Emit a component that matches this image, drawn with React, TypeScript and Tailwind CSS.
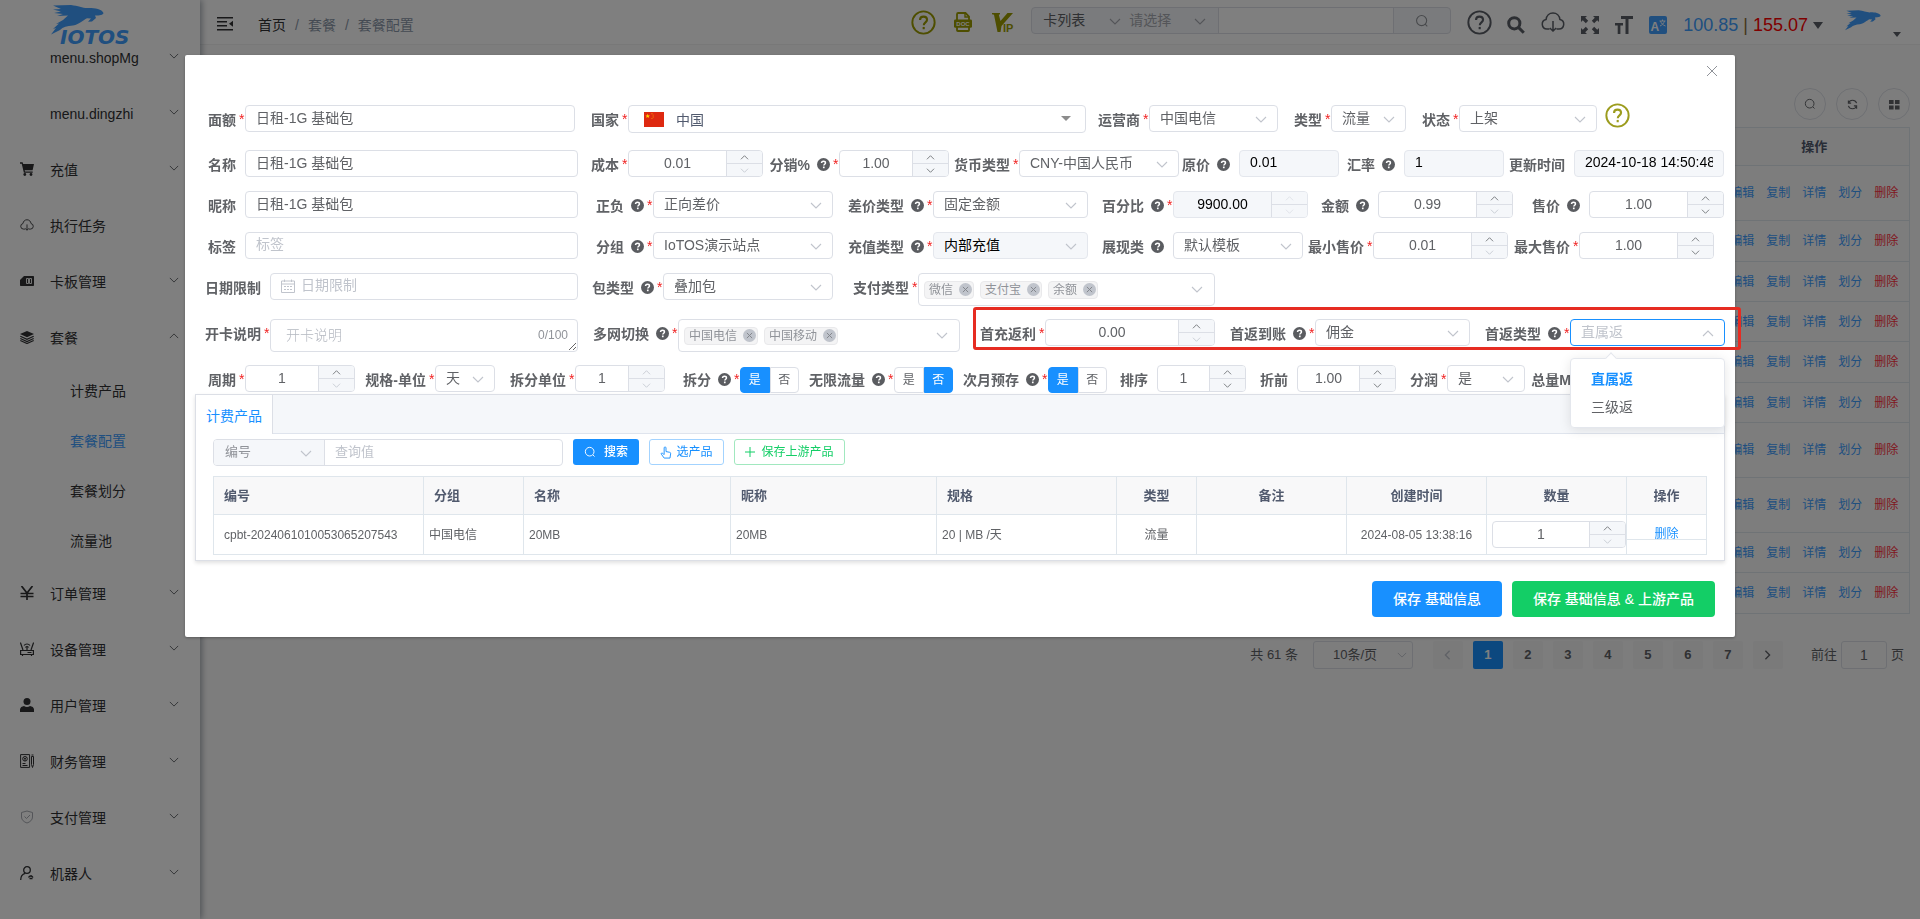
import React, { useState } from "react";
import { clsx } from "clsx";

type IconProps = { className?: string };

interface FieldProps {
    id: string;
    label: string;
    labelWidth: string;
    width: string;
    required?: boolean;
    help?: boolean;
}

/* ---------- Icons ---------- */

function Chevron({ className, up }: IconProps & { up?: boolean }) {
    return (
        <svg viewBox="0 0 12 7" fill="none" stroke="currentColor" strokeWidth="1.1" className={clsx("pointer-events-none h-[7px] w-3", className)}>
            <path d={up ? "M1 6 6 1l5 5" : "m1 1 5 5 5-5"} />
        </svg>
    );
}

function HelpDot() {
    return (
        <svg viewBox="0 0 14 14" className="size-[13px] shrink-0 text-[#5a5c60]">
            <circle cx="7" cy="7" r="7" fill="currentColor" />
            <path d="M4.9 5.5c0-1.3.9-2 2.1-2s2.1.7 2.1 1.8c0 1.4-1.8 1.4-1.8 2.8" fill="none" stroke="#fff" strokeWidth="1.6" />
            <rect x="6.4" y="9.2" width="1.8" height="1.8" fill="#fff" />
        </svg>
    );
}

function HelpRing({ className }: IconProps) {
    return (
        <svg viewBox="0 0 26 26" fill="none" stroke="currentColor" strokeWidth="2" className={clsx("size-[25px] shrink-0", className)}>
            <circle cx="13" cy="13" r="11.6" />
            <path d="M9.4 10.4c0-2.3 1.6-3.5 3.6-3.5s3.7 1.3 3.7 3.3c0 2.6-3.4 2.7-3.4 5.6" strokeWidth="2.2" />
            <path d="M13.2 17.6v2.4" strokeWidth="2.2" />
        </svg>
    );
}

function Lens({ className, bold }: IconProps & { bold?: boolean }) {
    return (
        <svg viewBox="0 0 18 18" fill="none" stroke="currentColor" strokeWidth={bold ? 3 : 1.4} className={className}>
            {bold ? <path d="M7.3 1.7a5.6 5.6 0 1 0 0 11.2 5.6 5.6 0 0 0 0-11.2ZM11.4 11.4l5.4 5.4" /> : <path d="M8.5 2a6.5 6.5 0 1 0 0 13 6.5 6.5 0 0 0 0-13ZM13.4 13.4l2.4 2.4" />}
        </svg>
    );
}

function DocIcon() {
    return (
        <svg viewBox="0 0 18 20" className="h-5 w-[18px] text-[#9c9c00]">
            <path d="M3 8V2.2C3 1.5 3.5 1 4.2 1h7.3L15 4.6V8" fill="none" stroke="currentColor" strokeWidth="1.8" />
            <path d="M11 1v4h4" fill="none" stroke="currentColor" strokeWidth="1.4" />
            <rect x="0" y="7.4" width="18" height="8.4" rx="1.4" fill="currentColor" />
            <path d="M3 15v3.2c0 .5.4.8.9.8h10.2c.5 0 .9-.3.9-.8V15" fill="none" stroke="currentColor" strokeWidth="1.8" />
            <text x="9" y="13.7" textAnchor="middle" fontSize="6" fontWeight="700" fill="#fff" fontFamily="Liberation Sans, sans-serif">DOC</text>
        </svg>
    );
}

function VipIcon() {
    return (
        <svg viewBox="0 0 22 20" className="h-5 w-[22px] text-[#9c9c00]">
            <path d="M0 0h8v1.2l-1.2.6L8.500 8 15.500 0H21L9.500 13l-1 6h-3L2 1.800 0 1.200Z" fill="currentColor" />
            <text x="11" y="19" fontSize="11" fontWeight="700" fill="currentColor" fontFamily="Liberation Sans, sans-serif">IP</text>
        </svg>
    );
}

function CloudDown({ className }: IconProps) {
    return (
        <svg viewBox="0 0 24 20" fill="none" stroke="currentColor" strokeWidth="1.5" className={className}>
            <path d="M8.5 17H6a4.8 4.8 0 0 1-.9-9.5C5.500 3.800 8.300 1 12 1s6.500 2.800 6.900 6.500A4.800 4.800 0 0 1 18 17h-2.500" />
            <path d="M12 9v9.500M8.800 16l3.200 3 3.200-3" />
        </svg>
    );
}

function ExpandIcon() {
    return (
        <svg viewBox="0 0 18 18" fill="currentColor" className="size-[18px]">
            <path d="M0 0h6L4.200 1.800l3 3-2.400 2.400-3-3L0 6ZM18 0v6l-1.800-1.800-3 3-2.400-2.400 3-3L12 0ZM0 18v-6l1.800 1.800 3-3 2.400 2.400-3 3L6 18ZM18 18h-6l1.800-1.800-3-3 2.400-2.400 3 3L18 12Z" />
        </svg>
    );
}

function FontSizeIcon() {
    return (
        <svg viewBox="0 0 18 18" fill="currentColor" className="size-[18px]">
            <path d="M6 0h12v3h-4.500v15h-3V3H6ZM0 7h8v2.600H5.400V18H2.700V9.600H0Z" />
        </svg>
    );
}

function TranslateIcon() {
    return (
        <svg viewBox="0 0 18 18" className="size-[18px]">
            <rect width="18" height="18" rx="2" fill="#409eff" />
            <text x="1.500" y="14.500" fontSize="12" fontWeight="700" fill="#fff" fontFamily="Liberation Sans, sans-serif">A</text>
            <path d="M10.500 5h6M13.500 3.500V5M15.500 5c-.8 2.600-2.300 4-4.500 5M11.500 5c.8 2.600 2.300 4 5 5" stroke="#fff" strokeWidth=".9" fill="none" />
        </svg>
    );
}

// Leaping animal of the brand mark, with speed streaks on its left side
const rabbitPath =
    "M2 .5 20 0c8 1 12 3.500 18 3 6 0 13 1 14.500 5-.5 2-3.500 2.500-8.500 2.500l1 2.500-4 3.500-4 .3 3-3.300-4-.3c-4 1.800-7 5.800-14 7.300-6 .5-10 1.500-13 4.500L0 29.500 5 23l-3 1 6-5.500-3 .5 7-4 5-4.500-11 .5 6-2-9-1 7-1.500-8-2 8-.5Z";

function Rabbit({ className }: IconProps) {
    return (
        <svg viewBox="0 0 53 30" fill="currentColor" className={className}>
            <path d={rabbitPath} />
        </svg>
    );
}

function MenuIcon({ name }: { name: string }) {
    const cls = "size-[14px]";
    switch (name) {
        case "cart":
            return (
                <svg viewBox="0 0 14 14" fill="currentColor" className={cls}>
                    <path d="M0 .3h2.600l.6 1.700H14l-1.400 6.300H4.700l.3 1.200h7.700v1.300H3.900L1.700 1.700H0Z" />
                    <circle cx="4.800" cy="12.500" r="1.400" />
                    <circle cx="11" cy="12.500" r="1.400" />
                </svg>
            );
        case "cloud":
            return <CloudDown className={cls} />;
        case "card":
            return (
                <svg viewBox="0 0 14 14" className={cls}>
                    <path d="M4 2h9c.6 0 1 .4 1 1v8c0 .6-.4 1-1 1H1c-.6 0-1-.4-1-1V6Z" fill="currentColor" />
                    <path d="M6.500 4.500h2v5h-2zM9.500 4.500h2v5h-2z" fill="none" stroke="#fff" strokeWidth=".9" />
                </svg>
            );
        case "stack":
            return (
                <svg viewBox="0 0 14 14" className={cls}>
                    <path d="m7 1 7 3-7 3.200L0 4Z" fill="currentColor" />
                    <path d="m.3 6.300 6.700 3 6.700-3M.3 8.500l6.700 3 6.700-3M.3 10.500l6.700 3 6.700-3" fill="none" stroke="currentColor" strokeWidth="1.200" />
                </svg>
            );
        case "yen":
            return (
                <svg viewBox="0 0 14 14" fill="none" stroke="currentColor" strokeWidth="1.700" className={cls}>
                    <path d="m1.500 0 5.500 7 5.500-7M7 7v7M.5 7.500h13M.5 10.500h13" />
                </svg>
            );
        case "router":
            return (
                <svg viewBox="0 0 14 14" fill="none" stroke="currentColor" strokeWidth="1.200" className={cls}>
                    <path d="M.6 8.500h12.800v4H.6zM3 8 .4.500M11 8 13.600.500M4 3.500C5.500 1.500 8.500 1.500 10 3.500M5.500 5.500c1-1 2-1 3 0M7 6v2M2.500 12.500V14M11.500 12.500V14M7.500 10.500h4" />
                </svg>
            );
        case "user":
            return (
                <svg viewBox="0 0 14 14" fill="currentColor" className={cls}>
                    <circle cx="7" cy="3.500" r="3.500" />
                    <path d="M0 14v-2.500C0 9.500 2 8.300 4 8c1.800 1.200 4.200 1.200 6 0 2 .3 4 1.500 4 3.500V14Z" />
                </svg>
            );
        case "bill":
            return (
                <svg viewBox="0 0 14 14" fill="none" stroke="currentColor" strokeWidth="1" className={cls}>
                    <path d="M.6.6h9v12.800h-9zM11.500 2.500h2v8l-1 3-1-3zM11.500 1h2" />
                    <circle cx="5" cy="4.800" r="2.300" />
                    <path d="M3.700 3.500 5 5l1.300-1.500M5 5v2M2.500 9.500h3M2.500 11.500h5" />
                </svg>
            );
        case "shield":
            return (
                <svg viewBox="0 0 14 14" fill="none" stroke="#a8abb2" strokeWidth="1" className={cls}>
                    <path d="m7 1 5.500 1.500V7c0 3-2.500 5-5.500 6C4 12 1.500 10 1.500 7V2.500ZM4.500 6.500 6.500 8.500 10 5" />
                </svg>
            );
        case "robot":
            return (
                <svg viewBox="0 0 14 14" fill="none" stroke="currentColor" strokeWidth="1.300" className={cls}>
                    <circle cx="7" cy="4" r="3.300" />
                    <path d="M.7 14c0-3.500 2-6 4.500-6.700M8.500 11.500c1-2 3.500-2 4.500 0M9.500 12.500h3M10 10h2" />
                </svg>
            );
        default:
            return null;
    }
}

/* ---------- Form controls ---------- */

const inputBase = "h-[27px] w-full rounded-[4px] border border-[#dcdfe6] bg-white px-2.5 text-sm text-[#606266] outline-none placeholder:text-[#c0c4cc] disabled:bg-[#f5f7fa] disabled:text-black disabled:border-[#e4e7ed]";

function FieldLabel({ id, label, labelWidth, required, help }: Omit<FieldProps, "width">) {
    return (
        <label htmlFor={id} className={clsx("flex h-[27px] shrink-0 items-center justify-end pt-0.5 text-sm font-bold whitespace-nowrap text-[#606266]", labelWidth)}>
            {label}
            {help && <span className="ml-[7px]"><HelpDot /></span>}
            <span className="w-[9px] pb-0.5 pl-[3px] text-sm font-normal text-[#f02020]">{required ? "*" : ""}</span>
        </label>
    );
}

function TextField({ value, placeholder, disabled, ...field }: FieldProps & { value?: string; placeholder?: string; disabled?: boolean }) {
    return (
        <>
            <FieldLabel {...field} />
            <div className={clsx("shrink-0", field.width)}>
                <input id={field.id} type="text" defaultValue={value} placeholder={placeholder} disabled={disabled} className={clsx(inputBase, "pb-[3px]")} />
            </div>
        </>
    );
}

function SelectField({ value, disabled, open, ...field }: FieldProps & { value: string; disabled?: boolean; open?: boolean }) {
    return (
        <>
            <FieldLabel {...field} />
            <div className={clsx("relative shrink-0", field.width)}>
                <select
                    id={field.id}
                    disabled={disabled}
                    className={clsx(inputBase, "appearance-none pb-0.5 disabled:opacity-100", open && "!border-[#1890ff] !text-[#c0c4cc]")}
                >
                    <option>{value}</option>
                </select>
                <Chevron up={open} className="absolute top-[11px] right-[11px] text-[#c0c4cc]" />
            </div>
        </>
    );
}

function NumberBox({ id, value, width, disabled, upOff, downOff, label }: { id: string; value: string; width: string; disabled?: boolean; upOff?: boolean; downOff?: boolean; label?: string }) {
    return (
        <div className={clsx("flex h-[27px] shrink-0 overflow-hidden rounded-[4px] border", width, disabled ? "border-[#e4e7ed] bg-[#f5f7fa]" : "border-[#dcdfe6] bg-white")}>
            <input
                id={id}
                aria-label={label}
                type="text"
                defaultValue={value}
                disabled={disabled}
                className={clsx("min-w-0 flex-1 pb-0.5 text-center text-sm outline-none", disabled ? "text-black" : "text-[#606266]")}
            />
            <div className="flex w-9 flex-col border-l border-[#dcdfe6] bg-[#f5f7fa]">
                <button type="button" aria-label="增加" className="flex flex-1 items-center justify-center border-b border-[#dcdfe6]">
                    <Chevron up className={clsx("!h-[5px] !w-[9px]", disabled ? "text-[#dcdfe6]" : upOff ? "text-[#c0c4cc]" : "text-[#606266]")} />
                </button>
                <button type="button" aria-label="减少" className="flex flex-1 items-center justify-center">
                    <Chevron className={clsx("!h-[5px] !w-[9px]", disabled ? "text-[#dcdfe6]" : downOff ? "text-[#c0c4cc]" : "text-[#606266]")} />
                </button>
            </div>
        </div>
    );
}

function NumberField({ value, disabled, upOff, downOff, ...field }: FieldProps & { value: string; disabled?: boolean; upOff?: boolean; downOff?: boolean }) {
    return (
        <>
            <FieldLabel {...field} />
            <NumberBox id={field.id} value={value} width={field.width} disabled={disabled} upOff={upOff} downOff={downOff} />
        </>
    );
}

function TagsField({ tags, ...field }: FieldProps & { tags: string[] }) {
    return (
        <>
            <FieldLabel {...field} />
            <div id={field.id} className={clsx("flex h-[33px] shrink-0 items-center gap-1.5 rounded-[4px] border border-[#dcdfe6] pl-[5px] pr-[11px]", field.width)}>
                {tags.map((tag) => (
                    <span key={tag} className="flex h-[18px] items-center gap-1.5 rounded-[4px] border border-[#e9e9eb] bg-[#f4f4f5] pl-1 pr-px text-xs text-[#909399]">
                        {tag}
                        <button type="button" aria-label={`移除 ${tag}`} className="flex size-[13px] items-center justify-center rounded-full bg-[#c0c4cc] text-[#82858b]">
                            <svg viewBox="0 0 8 8" className="size-[7px]" stroke="currentColor" strokeWidth="1.1">
                                <path d="m1 1 6 6M7 1 1 7" />
                            </svg>
                        </button>
                    </span>
                ))}
                <Chevron className="ml-auto text-[#c0c4cc]" />
            </div>
        </>
    );
}

function YesNoField({ initial, ...field }: FieldProps & { initial: string }) {
    const [value, setValue] = useState(initial);
    return (
        <>
            <FieldLabel {...field} />
            <div className={clsx("mt-0.5 flex h-[26px] shrink-0", field.width)}>
                {["是", "否"].map((opt, i) => (
                    <label
                        key={opt}
                        className={clsx(
                            "flex flex-1 items-center justify-center border text-xs",
                            i === 0 ? "rounded-l-[4px]" : "rounded-r-[4px]",
                            value === opt ? "border-[#1890ff] bg-[#1890ff] text-white" : "border-[#dcdfe6] bg-white text-[#606266]"
                        )}
                    >
                        <input id={i === 0 ? field.id : undefined} type="radio" name={field.id} checked={value === opt} onChange={() => setValue(opt)} className="sr-only" />
                        {opt}
                    </label>
                ))}
            </div>
        </>
    );
}

/* ---------- Page behind the dialog ---------- */

const menu = [
    { label: "menu.shopMg", icon: "" },
    { label: "menu.dingzhi", icon: "" },
    { label: "充值", icon: "cart" },
    { label: "执行任务", icon: "cloud", leaf: true },
    { label: "卡板管理", icon: "card" },
    { label: "套餐", icon: "stack", children: ["计费产品", "套餐配置", "套餐划分", "流量池"] },
    { label: "订单管理", icon: "yen" },
    { label: "设备管理", icon: "router" },
    { label: "用户管理", icon: "user" },
    { label: "财务管理", icon: "bill" },
    { label: "支付管理", icon: "shield" },
    { label: "机器人", icon: "robot" },
];

function Sidebar() {
    return (
        <aside className="z-10 w-[200px] shrink-0 bg-white shadow-[2px_0_6px_rgba(0,21,41,0.35)]">
            <a href="#home" aria-label="IOTOS" className="flex h-[46px] justify-center text-[#409eff]">
                <svg viewBox="0 0 98 46" fill="currentColor" className="h-[46px] w-[98px] overflow-visible">
                    <path d={rabbitPath} transform="translate(0 5)" />
                    <text x="9" y="44" fontSize="20" fontWeight="700" fontStyle="italic" fontFamily="DejaVu Sans, sans-serif">IOTOS</text>
                </svg>
            </a>
            <nav className="-mt-4 text-sm text-[#303133]">
                {menu.map((item) => (
                    <React.Fragment key={item.label}>
                        <a href="#menu" className="flex h-14 items-center pr-[21px] pl-5">
                            <span className="w-[30px] pb-0.5"><MenuIcon name={item.icon} /></span>
                            <span className="flex-1">{item.label}</span>
                            {!item.leaf && <Chevron up={!!item.children} className="mb-1 !h-[6px] !w-[10px] text-[#606266]" />}
                        </a>
                        {item.children?.map((child) => (
                            <a key={child} href="#sub" className={clsx("flex h-[50px] items-center pl-[70px]", child === "套餐配置" && "text-[#409eff]")}>
                                {child}
                            </a>
                        ))}
                    </React.Fragment>
                ))}
            </nav>
        </aside>
    );
}

function TopBar() {
    return (
        <header className="flex h-[45px] items-start border-b border-[#f0f0f0] bg-white pr-[19px] pl-[17px] text-[#5a5e66]">
            <button type="button" aria-label="收起菜单" className="mt-4 text-[#303133]">
                <svg viewBox="0 0 16 16" fill="currentColor" className="size-4">
                    <path d="M0 1h16v1.600H0zM0 5h10v1.600H0zM0 9h10v1.600H0zM0 13h16v1.600H0zM16 4.700v6L12 7.700Z" />
                </svg>
            </button>
            <nav className="mt-[15px] ml-[25px] flex gap-[9px] text-sm text-[#8b97a8]">
                <a href="#home" className="text-[#303133]">首页</a>
                <span>/</span>
                <span>套餐</span>
                <span>/</span>
                <span>套餐配置</span>
            </nav>
            <div className="ml-auto flex items-start">
                <HelpRing className="mt-2.5 mr-[18px] text-[#9c9c00]" />
                <span className="mt-3 mr-5"><DocIcon /></span>
                <span className="mt-[13px] mr-[17px]"><VipIcon /></span>
                <div className="mt-[7px] flex h-[27px] w-[420px] overflow-hidden rounded-[4px] border border-[#dcdfe6] bg-[#f5f7fa] text-sm">
                    <div className="relative w-[86px]">
                        <select aria-label="查询范围" className="h-full w-full appearance-none pb-0.5 pl-[11px] text-[#606266]"><option>卡列表</option></select>
                        <Chevron className="absolute top-[10px] left-[77px] text-[#a8abb2]" />
                    </div>
                    <div className="relative w-[100px]">
                        <select aria-label="查询字段" className="h-full w-full appearance-none pb-0.5 pl-[11px] text-[#a8abb2]"><option>请选择</option></select>
                        <Chevron className="absolute top-[10px] right-3 text-[#a8abb2]" />
                    </div>
                    <input aria-label="查询内容" className="min-w-0 flex-1 border-x border-[#dcdfe6] bg-white" />
                    <button type="button" aria-label="查询" className="flex w-14 items-center justify-center text-[#909399]"><Lens className="size-[14px]" /></button>
                </div>
                <HelpRing className="mt-2.5 ml-4" />
                <Lens bold className="mt-4 ml-[15px] size-[18px]" />
                <CloudDown className="mt-3 ml-4 h-5 w-6" />
                <span className="mt-4 ml-4"><ExpandIcon /></span>
                <span className="mt-4 ml-4"><FontSizeIcon /></span>
                <span className="mt-4 ml-4"><TranslateIcon /></span>
                <button type="button" className="mt-3 ml-4 flex items-center gap-[5px] text-lg leading-[26px]">
                    <span className="text-[#409eff]">100.85</span>
                    <span className="text-[#8a6d3b]">|</span>
                    <span className="text-[#ff0000]">155.07</span>
                    <span className="border-x-[5px] border-t-[7px] border-x-transparent border-t-[#5a5e66]" />
                </button>
                <button type="button" aria-label="账户" className="mt-2 ml-[22px] flex items-end text-[#409eff]">
                    <Rabbit className="h-[25px] w-[36px]" />
                    <span className="-mb-1 ml-3 border-x-[4px] border-t-[5px] border-x-transparent border-t-[#5a5e66]" />
                </button>
            </div>
        </header>
    );
}

const rowHeights = ["h-[55px]", "h-[41px]", "h-[40px]", "h-[40px]", "h-[41px]", "h-[40px]", "h-[55px]", "h-[55px]", "h-[40px]", "h-[41px]"];

function PackageList() {
    return (
        <main className="flex-1 pt-[43px] pr-[10px] pl-[10px]">
            <div className="flex justify-end gap-2.5 text-[#606266]">
                <button type="button" aria-label="搜索" className="flex size-8 items-center justify-center rounded-full border border-[#dcdfe6]"><Lens className="size-3" /></button>
                <button type="button" aria-label="刷新" className="flex size-8 items-center justify-center rounded-full border border-[#dcdfe6]">
                    <svg viewBox="0 0 12 12" fill="none" stroke="currentColor" strokeWidth="1.200" className="size-[11px]">
                        <path d="M1.500 4.500a4.800 4.800 0 0 1 9 0M10.500 7.500a4.800 4.800 0 0 1-9 0M1.500 1.500v3h3M10.500 10.500v-3h-3" />
                    </svg>
                </button>
                <button type="button" aria-label="列设置" className="flex size-8 items-center justify-center rounded-full border border-[#dcdfe6]">
                    <svg viewBox="0 0 12 12" fill="currentColor" className="size-[11px]"><path d="M0 1h5v4.500H0zM6.500 1h5v4.500h-5zM0 7h5v4.500H0zM6.500 7h5v4.500h-5z" /></svg>
                </button>
            </div>
            <table className="mt-[7px] w-full table-fixed border-collapse border border-[#dfe6ec] text-xs">
                <colgroup>
                    <col />
                    <col className="w-[190px]" />
                </colgroup>
                <thead>
                    <tr className="h-[38px] bg-[#f8f8f9]">
                        <th />
                        <th className="text-[13px] font-bold text-[#515a6e]">操作</th>
                    </tr>
                </thead>
                <tbody>
                    {rowHeights.map((h, i) => (
                        <tr key={i} className={clsx("border-t border-[#dfe6ec]", h)}>
                            <td />
                            <td>
                                <div className="flex justify-center gap-3 text-[#409eff]">
                                    <a href="#edit">编辑</a>
                                    <a href="#copy">复制</a>
                                    <a href="#detail">详情</a>
                                    <a href="#divide">划分</a>
                                    <a href="#delete" className="text-[#ff3040]">删除</a>
                                </div>
                            </td>
                        </tr>
                    ))}
                </tbody>
            </table>
            <div className="mt-[27px] flex items-center justify-end pr-1.5 text-[13px] text-[#606266]">
                <span>共 61 条</span>
                <div className="relative ml-[15px] w-[100px]">
                    <select aria-label="每页条数" className="h-[28px] w-full appearance-none rounded-[3px] border border-[#dcdfe6] pl-[19px]"><option>10条/页</option></select>
                    <Chevron className="absolute top-[11px] right-1.5 !h-[6px] !w-[10px] text-[#c0c4cc]" />
                </div>
                <div className="ml-5 flex gap-2.5 font-bold">
                    <button type="button" aria-label="上一页" className="flex h-[28px] w-[30px] items-center justify-center rounded-[2px] bg-[#f4f4f5] text-[#c0c4cc]">
                        <svg viewBox="0 0 8 12" fill="none" stroke="currentColor" strokeWidth="1.600" className="h-[10px] w-[7px]"><path d="M6.500 1 1.500 6l5 5" /></svg>
                    </button>
                    {[1, 2, 3, 4, 5, 6, 7].map((p) => (
                        <button key={p} type="button" className={clsx("h-[28px] w-[30px] rounded-[2px]", p === 1 ? "bg-[#1890ff] text-white" : "bg-[#f4f4f5]")}>{p}</button>
                    ))}
                    <button type="button" aria-label="下一页" className="flex h-[28px] w-[30px] items-center justify-center rounded-[2px] bg-[#f4f4f5]">
                        <svg viewBox="0 0 8 12" fill="none" stroke="currentColor" strokeWidth="1.600" className="h-[10px] w-[7px]"><path d="m1.500 1 5 5-5 5" /></svg>
                    </button>
                </div>
                <label className="ml-7 flex items-center gap-1">
                    前往
                    <input defaultValue="1" className="h-[28px] w-[46px] rounded-[3px] border border-[#dcdfe6] text-center text-sm" />
                    页
                </label>
            </div>
        </main>
    );
}

/* ---------- Dialog ---------- */

function PackageForm() {
    return (
        <form className="text-sm">
            <div className="mb-[18px] flex">
                <TextField id="amount" label="面额" labelWidth="w-[60px]" width="w-[330px]" required value="日租-1G 基础包" />
                <FieldLabel id="country" label="国家" labelWidth="w-[53px]" required />
                <div className="relative w-[458px] shrink-0">
                    <svg viewBox="0 0 20 15" className="pointer-events-none absolute top-[7px] left-4 h-[15px] w-5">
                        <rect width="20" height="15" fill="#de2910" />
                        <path d="m3.700 1.800.6 1.600H6L4.700 4.500l.5 1.600-1.500-1-1.500 1 .5-1.600-1.300-1.100h1.700Z" fill="#ffde00" />
                        <path d="M7.500 1.300h.9v.9h-.9zM8.700 2.700h.9v.9h-.9zM8.700 4.500h.9v.9h-.9zM7.500 5.900h.9v.9h-.9z" fill="#ffb000" />
                    </svg>
                    <select id="country" className="h-[28px] w-full appearance-none rounded-[4px] border border-[#dcdfe6] pt-px pl-[47px] text-sm text-[#515a6e]">
                        <option>中国</option>
                    </select>
                    <span className="pointer-events-none absolute top-[11px] right-[15px] border-x-[5px] border-t-[5px] border-x-transparent border-t-[#8c8c8c]" />
                </div>
                <SelectField id="carrier" label="运营商" labelWidth="w-[63px]" width="w-[129px]" required value="中国电信" />
                <SelectField id="kind" label="类型" labelWidth="w-[53px]" width="w-[75px]" required value="流量" />
                <SelectField id="status" label="状态" labelWidth="w-[53px]" width="w-[138px]" required value="上架" />
                <HelpRing className="-mt-0.5 ml-2 text-[#9c9c1e]" />
            </div>

            <div className="-mt-px mb-3.5 flex">
                <TextField id="name" label="名称" labelWidth="w-[60px]" width="w-[333px]" value="日租-1G 基础包" />
                <NumberField id="cost" label="成本" labelWidth="w-[50px]" width="w-[135px]" required value="0.01" downOff />
                <NumberField id="share" label="分销%" labelWidth="w-[76px]" width="w-[110px]" required help value="1.00" />
                <SelectField id="currency" label="货币类型" labelWidth="w-[70px]" width="w-[160px]" required value="CNY-中国人民币" />
                <TextField id="origin" label="原价" labelWidth="w-[60px]" width="w-[100px]" help disabled value="0.01" />
                <TextField id="rate" label="汇率" labelWidth="w-[65px]" width="w-[100px]" help disabled value="1" />
                <TextField id="updated" label="更新时间" labelWidth="w-[70px]" width="w-[150px]" disabled value="2024-10-18 14:50:48" />
            </div>

            <div className="mb-3.5 flex">
                <TextField id="nick" label="昵称" labelWidth="w-[60px]" width="w-[333px]" value="日租-1G 基础包" />
                <SelectField id="sign" label="正负" labelWidth="w-[75px]" width="w-[180px]" required help value="正向差价" />
                <SelectField id="diffType" label="差价类型" labelWidth="w-[100px]" width="w-[155px]" required help value="固定金额" />
                <NumberField id="percent" label="百分比" labelWidth="w-[85px]" width="w-[135px]" required help disabled value="9900.00" />
                <NumberField id="money" label="金额" labelWidth="w-[70px]" width="w-[135px]" help value="0.99" downOff />
                <NumberField id="price" label="售价" labelWidth="w-[76px]" width="w-[135px]" help value="1.00" />
            </div>

            <div className="mb-3.5 flex">
                <TextField id="tag" label="标签" labelWidth="w-[60px]" width="w-[333px]" placeholder="标签" />
                <SelectField id="group" label="分组" labelWidth="w-[75px]" width="w-[180px]" required help value="IoTOS演示站点" />
                <SelectField id="payKind" label="充值类型" labelWidth="w-[100px]" width="w-[155px]" required help disabled value="内部充值" />
                <SelectField id="template" label="展现类" labelWidth="w-[85px]" width="w-[130px]" help value="默认模板" />
                <NumberField id="minPrice" label="最小售价" labelWidth="w-[70px]" width="w-[135px]" required value="0.01" downOff />
                <NumberField id="maxPrice" label="最大售价" labelWidth="w-[71px]" width="w-[135px]" required value="1.00" />
            </div>

            <div className="mb-[13px] flex">
                <FieldLabel id="dateLimit" label="日期限制" labelWidth="w-[85px]" />
                <div className="relative w-[308px] shrink-0">
                    <svg viewBox="0 0 14 14" fill="none" stroke="currentColor" strokeWidth="1" className="absolute top-1.5 left-[11px] size-[14px] text-[#c0c4cc]">
                        <path d="M.5 2h13v11.500H.5zM.5 5h13M3.500.5v2.500M10.500.5v2.500M3 7.500h2M6 7.500h2M9 7.500h2M3 10.500h2M6 10.500h2M9 10.500h2" />
                    </svg>
                    <input id="dateLimit" type="text" placeholder="日期限制" className={clsx(inputBase, "!pl-[30px] pb-[3px]")} />
                </div>
                <SelectField id="bagType" label="包类型" labelWidth="w-[85px]" width="w-[170px]" required help value="叠加包" />
                <TagsField id="payType" label="支付类型" labelWidth="w-[85px]" width="w-[297px]" required tags={["微信", "支付宝", "余额"]} />
            </div>

            <div className="mb-[13px] flex">
                <FieldLabel id="remark" label="开卡说明" labelWidth="w-[85px]" required />
                <div className="relative h-[33px] w-[308px] shrink-0">
                    <textarea id="remark" placeholder="开卡说明" className="h-[33px] w-full resize overflow-hidden rounded-[4px] border border-[#dcdfe6] px-[15px] py-[5px] text-sm leading-[21px] font-light outline-none placeholder:text-[#b4b8c0]" />
                    <span className="pointer-events-none absolute top-2 right-2.5 text-xs text-[#909399]">0/100</span>
                </div>
                <TagsField id="network" label="多网切换" labelWidth="w-[100px]" width="w-[282px]" required help tags={["中国电信", "中国移动"]} />
                <div className="relative flex">
                    <NumberField id="firstRebate" label="首充返利" labelWidth="w-[85px]" width="w-[170px]" required value="0.00" downOff />
                    <SelectField id="rebateTo" label="首返到账" labelWidth="w-[100px]" width="w-[155px]" required help value="佣金" />
                    <SelectField id="rebateType" label="首返类型" labelWidth="w-[100px]" width="w-[155px]" required help open value="直属返" />
                    <div className="pointer-events-none absolute -top-3 -right-4 left-[13px] h-[43px] rounded-[3px] border-3 border-[#e62c22]" />
                    <ul role="listbox" aria-label="首返类型选项" className="absolute top-[39px] right-0 z-20 w-[155px] rounded-[4px] border border-[#e4e7ed] bg-white py-1.5 text-sm leading-7 text-[#606266] shadow-[0_2px_12px_rgba(0,0,0,0.1)]">
                        <li aria-hidden="true" className="absolute -top-[5px] left-9 size-2 rotate-45 border-t border-l border-[#e4e7ed] bg-white" />
                        <li role="option" aria-selected="true" className="px-5 font-bold text-[#1890ff]">直属返</li>
                        <li role="option" aria-selected="false" className="px-5">三级返</li>
                    </ul>
                </div>
            </div>

            <div className="mb-px flex">
                <NumberField id="cycle" label="周期" labelWidth="w-[60px]" width="w-[110px]" required value="1" downOff />
                <SelectField id="unit" label="规格-单位" labelWidth="w-[80px]" width="w-[60px]" required value="天" />
                <NumberField id="splitUnit" label="拆分单位" labelWidth="w-[80px]" width="w-[90px]" required value="1" upOff downOff />
                <YesNoField id="split" label="拆分" labelWidth="w-[75px]" width="w-[59px]" required help initial="是" />
                <YesNoField id="unlimited" label="无限流量" labelWidth="w-[95px]" width="w-[59px]" required help initial="否" />
                <YesNoField id="prestore" label="次月预存" labelWidth="w-[95px]" width="w-[59px]" required help initial="是" />
                <NumberField id="sort" label="排序" labelWidth="w-[50px]" width="w-[89px]" value="1" />
                <NumberField id="before" label="折前" labelWidth="w-[51px]" width="w-[99px]" value="1.00" />
                <SelectField id="profit" label="分润" labelWidth="w-[51px]" width="w-[78px]" required value="是" />
                <TextField id="total" label="总量MB" labelWidth="w-[65px]" width="w-[90px]" required />
            </div>
        </form>
    );
}

const columns = [
    { title: "编号", width: "w-[210px]" },
    { title: "分组", width: "w-[100px]" },
    { title: "名称", width: "w-[207px]" },
    { title: "昵称", width: "w-[206px]" },
    { title: "规格", width: "w-[180px]" },
    { title: "类型", width: "w-[80px]", center: true },
    { title: "备注", width: "w-[150px]", center: true },
    { title: "创建时间", width: "w-[140px]", center: true },
    { title: "数量", width: "w-[140px]", center: true },
    { title: "操作", width: "w-[80px]", center: true },
];

function ProductCard() {
    return (
        <section className="mx-2.5 border border-[#dcdfe6] bg-white shadow-[0_2px_4px_rgba(0,0,0,0.12)]">
            <div className="flex h-[39px] border-b border-[#dfe4ed] bg-[#f5f7fa]">
                <button type="button" role="tab" aria-selected="true" className="-mb-px h-[39px] border-r border-[#dcdfe6] bg-white px-2.5 pt-0.5 text-sm text-[#1890ff]">
                    计费产品
                </button>
            </div>
            <div className="px-[17px] pt-[5px] pb-[5px]">
                <div className="mb-2.5 flex">
                    <div className="mr-2.5 flex h-[27px] w-[350px] overflow-hidden rounded-[4px] border border-[#dcdfe6] text-[13px]">
                        <div className="relative w-[111px] border-r border-[#dcdfe6] bg-[#f5f7fa]">
                            <select aria-label="查询字段" className="h-full w-full appearance-none pl-[11px] pb-0.5 text-[#909399]"><option>编号</option></select>
                            <Chevron className="absolute top-[10px] right-3 text-[#c0c4cc]" />
                        </div>
                        <input aria-label="查询值" placeholder="查询值" className="min-w-0 flex-1 pb-0.5 pl-2.5 outline-none placeholder:text-[#c0c4cc]" />
                    </div>
                    <button type="button" className="mr-2.5 flex h-[26px] w-[66px] items-center justify-center gap-2 rounded-[3px] bg-[#1890ff] text-xs font-medium text-white">
                        <Lens className="size-3" />
                        搜索
                    </button>
                    <button type="button" className="mr-2.5 flex h-[26px] w-[75px] items-center justify-center gap-1 rounded-[3px] border border-[#a3d3ff] text-xs text-[#1890ff]">
                        <svg viewBox="0 0 12 14" fill="none" stroke="currentColor" strokeWidth="1" className="h-[13px] w-3">
                            <path d="M4 9V2c0-1.300 2-1.300 2 0v4l4 .8c.8.2 1.200.7 1 1.500L10.300 13H4L1 8.800c-.6-1 .6-1.800 1.400-1L4 9.500" />
                        </svg>
                        选产品
                    </button>
                    <button type="button" className="flex h-[26px] w-[111px] items-center justify-center gap-1.5 rounded-[3px] border border-[#a1e8bf] text-xs text-[#13ce66]">
                        <svg viewBox="0 0 10 10" stroke="currentColor" className="size-[10px]"><path d="M5 0v10M0 5h10" /></svg>
                        保存上游产品
                    </button>
                </div>
                <table className="w-[1493px] table-fixed border-collapse border border-[#dfe6ec] text-xs text-[#606266]">
                    <thead>
                        <tr className="h-[38px] bg-[#f8f8f9]">
                            {columns.map((col) => (
                                <th key={col.title} className={clsx("border border-[#dfe6ec] px-2.5 text-[13px] font-bold text-[#515a6e]", col.width, col.center ? "text-center" : "text-left")}>{col.title}</th>
                            ))}
                        </tr>
                    </thead>
                    <tbody>
                        <tr className="h-[40px] [&>td]:border [&>td]:border-[#dfe6ec] [&>td]:px-[5px]">
                            <td className="!pl-2.5">cpbt-2024061010053065207543</td>
                            <td>中国电信</td>
                            <td>20MB</td>
                            <td>20MB</td>
                            <td>20 | MB /天</td>
                            <td className="text-center">流量</td>
                            <td />
                            <td className="text-center whitespace-nowrap">2024-08-05 13:38:16</td>
                            <td className="!pr-0"><NumberBox id="qty" label="数量" value="1" width="w-full" downOff /></td>
                            <td className="!p-0 align-top">
                                <div className="flex h-[25px] items-end justify-center overflow-hidden border-b border-[#dfe6ec]">
                                    <a href="#remove" className="-mb-[3px] leading-4 text-[#1890ff]">删除</a>
                                </div>
                            </td>
                        </tr>
                    </tbody>
                </table>
            </div>
        </section>
    );
}

export default function App(): React.JSX.Element {
    return (
        <div className="min-h-screen bg-white font-['Liberation_Sans','Noto_Sans_CJK_SC',sans-serif]">
            <div className="flex min-h-screen">
                <Sidebar />
                <div className="flex min-w-0 flex-1 flex-col bg-[#fbfbfb]">
                    <TopBar />
                    <PackageList />
                </div>
            </div>

            <div className="fixed inset-0 z-30 bg-black/50">
                <div role="dialog" aria-label="套餐配置" className="mx-[185px] mt-[55px] rounded-[2px] bg-white pb-5 shadow-[0_1px_3px_rgba(0,0,0,0.3)]">
                    <div className="flex h-[50px] justify-end pt-[11px] pr-[18px]">
                        <button type="button" aria-label="关闭" className="size-[10px] text-[#909399]">
                            <svg viewBox="0 0 10 10" stroke="currentColor" className="size-[10px]"><path d="m0 0 10 10M10 0 0 10" /></svg>
                        </button>
                    </div>
                    <PackageForm />
                    <ProductCard />
                    <div className="mt-5 mr-5 flex justify-end gap-2.5 text-sm font-medium text-white">
                        <button type="button" className="h-9 w-[130px] rounded-[4px] bg-[#1890ff]">保存 基础信息</button>
                        <button type="button" className="h-9 w-[203px] rounded-[4px] bg-[#13ce66]">保存 基础信息 &amp; 上游产品</button>
                    </div>
                </div>
            </div>
        </div>
    );
}
